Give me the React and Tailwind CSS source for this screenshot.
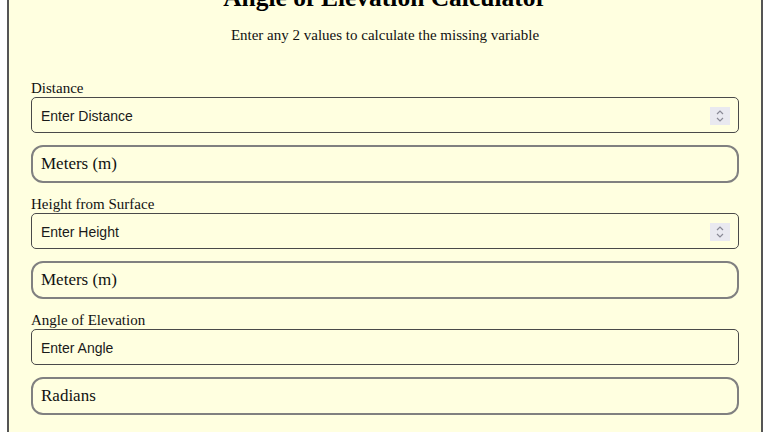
import React from 'react';

const groups = [
  { label: 'Distance', placeholder: 'Enter Distance', unit: 'Meters (m)', spinner: true },
  { label: 'Height from Surface', placeholder: 'Enter Height', unit: 'Meters (m)', spinner: true },
  { label: 'Angle of Elevation', placeholder: 'Enter Angle', unit: 'Radians', spinner: false },
];

function Spinner() {
  return (
    <div className="pointer-events-none absolute right-[9px] top-[10px] flex h-[18px] w-[20px] items-center justify-center bg-[#e9e9f0]">
      <svg width="10" height="14" viewBox="0 0 10 14" fill="none" stroke="#8a8a96" strokeWidth="1.2">
        <path d="M2 5 L5 2 L8 5" />
        <path d="M2 9 L5 12 L8 9" />
      </svg>
    </div>
  );
}

export default function App() {
  return (
    <div className="min-h-[432px] bg-white overflow-hidden">
      <div
        className="-mt-[19px] ml-[7px] mr-[5px] border-2 border-[#555] bg-[#ffffe0] px-[22px] pb-[40px]"
        style={{ fontFamily: '"Liberation Serif", "Times New Roman", serif' }}
      >
        {/* Header */}
        <h1 className="text-center text-[25.5px] font-bold leading-[30px] text-black">
          Angle of Elevation Calculator
        </h1>
        <p className="mt-[12px] text-center text-[15px] leading-[20px] text-[#111]">
          Enter any 2 values to calculate the missing variable
        </p>

        {/* Fields */}
        <div className="mt-[34px] flex flex-col gap-[12px]">
          {groups.map((g) => (
            <div key={g.label} className="flex flex-col">
              <label className="text-[15px] leading-[18px] text-[#111]">{g.label}</label>
              <div className="relative">
                <input
                  type="text"
                  placeholder={g.placeholder}
                  className="h-[36px] w-full rounded-[5px] border border-[#4a4a4a] bg-transparent pl-[9px] pt-[1px] text-[14px] text-black outline-none placeholder:text-[#1a1a1a]"
                  style={{ fontFamily: '"Liberation Sans", Arial, sans-serif' }}
                />
                {g.spinner && <Spinner />}
              </div>
              <div className="mt-[12px] flex h-[38px] items-center rounded-[12px] border-2 border-[#808080] pl-[8px] text-[17px] text-[#111]">
                {g.unit}
              </div>
            </div>
          ))}
        </div>
      </div>
    </div>
  );
}
